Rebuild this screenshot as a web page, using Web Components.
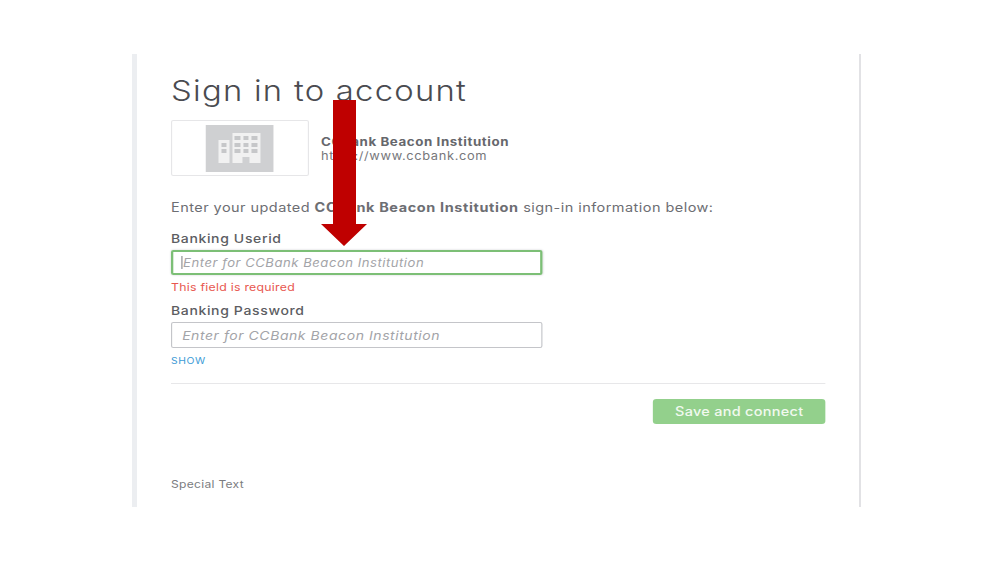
<!DOCTYPE html>
<html>
<head>
<meta charset="utf-8">
<title>Sign in to account</title>
<style>
html, body { margin: 0; background: #fff; }
body { font-family: Inter, "Open Sans", sans-serif; color: #6b6c72; }
b { letter-spacing: .53px; }
</style>
</head>
<body>
<signin-page>
  <signin-panel>
    <h1 slot="title">Sign in to account</h1>
    <bank-card slot="bank" name="CCBank Beacon Institution" url="https://www.ccbank.com"></bank-card>
    <span slot="intro">Enter your updated <b>CCBank Beacon Institution</b> sign-in information below:</span>
    <text-field slot="fields" label="Banking Userid" state="focus" error="This field is required"></text-field>
    <text-field slot="fields" label="Banking Password" action="SHOW"></text-field>
    <span slot="button">Save and connect</span>
    <span slot="footer">Special Text</span>
  </signin-panel>
  <down-arrow></down-arrow>
</signin-page>

<script>
const pageTemplate = document.createElement('template');
pageTemplate.innerHTML = `
<style>
:host { display: block; position: relative; width: 999px; height: 562px; padding: 54px 0 0 132px; box-sizing: border-box; overflow: hidden; }
</style>
<slot></slot>
`;

class SigninPage extends HTMLElement {
	constructor() {
		super();
		this.attachShadow({ mode: 'open' }).append(pageTemplate.content.cloneNode(true));
	}
}

// the reference is a screenshot stretched sideways, so the column is stretched the same way
const panelTemplate = document.createElement('template');
panelTemplate.innerHTML = `
<style>
:host { display: block; width: 729px; height: 453px; box-sizing: border-box; border-left: 5px solid #eceef1; border-right: 2px solid #e2e2e5; padding: 20px 0 0 34px; }
.column { width: 569.3px; transform: scaleX(1.15); transform-origin: left top; }
.title ::slotted(h1) { margin: 0; font-size: 28.5px; line-height: 34px; font-weight: 300; letter-spacing: 1.1px; color: #4a4b50; }
.bank { margin-top: 12px; }
.intro { margin-top: 23px; font-size: 12.6px; line-height: 18px; letter-spacing: .4px; color: #6d6e73; }
.fields { margin-top: 14px; display: flex; flex-direction: column; }
hr { margin: 16px 0 0; border: 0; border-top: 1.5px solid #e7e7e9; }
.actions { display: flex; justify-content: flex-end; margin-top: 15px; }
.button { width: 150.4px; height: 25px; display: flex; align-items: center; justify-content: center; background: #93d08c; border-radius: 3px; color: #f1f9ef; font-size: 12.6px; font-weight: 500; letter-spacing: .25px; }
.footer { margin-top: 53px; font-size: 10.5px; line-height: 16px; letter-spacing: .25px; color: #7b7c80; }
</style>
<div class="column">
	<div class="title"><slot name="title"></slot></div>
	<div class="bank"><slot name="bank"></slot></div>
	<div class="intro"><slot name="intro"></slot></div>
	<div class="fields"><slot name="fields"></slot></div>
	<hr>
	<div class="actions"><div class="button"><slot name="button"></slot></div></div>
	<div class="footer"><slot name="footer"></slot></div>
</div>
`;

class SigninPanel extends HTMLElement {
	constructor() {
		super();
		this.attachShadow({ mode: 'open' }).append(panelTemplate.content.cloneNode(true));
	}
}

const cardTemplate = document.createElement('template');
cardTemplate.innerHTML = `
<style>
:host { display: flex; align-items: center; gap: 10.4px; }
.logo { width: 120px; height: 56px; box-sizing: border-box; border: 1px solid #e6e6e8; border-radius: 2px; display: flex; align-items: center; justify-content: center; }
svg { display: block; }
.info { padding-top: 2px; }
.name { font-size: 11.6px; line-height: 14px; font-weight: 700; letter-spacing: .5px; color: #66676c; }
.url { font-size: 11.2px; line-height: 15px; letter-spacing: .55px; color: #77787c; }
</style>
<div class="logo">
	<svg width="59.1" height="47" viewBox="0 0 68 47" preserveAspectRatio="none">
		<rect width="68" height="47" fill="#cfd0d2"/>
		<path fill="#f1f1f1" d="M13 15h11v23H13zM27 8h28v30H44v-6h-7v6H27z"/>
		<path fill="#c6c7c9" d="M16 18h5v4h-5zM16 24h5v4h-5zM29 11h6v4h-6zM38 11h5v4h-5zM46 11h6v4h-6zM29 18h6v4h-6zM38 18h5v4h-5zM46 18h6v4h-6zM29 24h6v4h-6zM38 24h5v4h-5zM46 24h6v4h-6z"/>
	</svg>
</div>
<div class="info">
	<div class="name"></div>
	<div class="url"></div>
</div>
`;

class BankCard extends HTMLElement {
	constructor() {
		super();
		let shadowDOM = this.attachShadow({ mode: 'open' });
		shadowDOM.append(cardTemplate.content.cloneNode(true));
		shadowDOM.querySelector('.name').textContent = this.getAttribute('name');
		shadowDOM.querySelector('.url').textContent = this.getAttribute('url');
	}
}

const fieldTemplate = document.createElement('template');
fieldTemplate.innerHTML = `
<style>
:host { display: block; width: 322.7px; }
.label { font-size: 12.2px; line-height: 16px; font-weight: 500; letter-spacing: .55px; color: #5c5d62; margin-bottom: 3px; }
.box { position: relative; height: 26px; box-sizing: border-box; border: 1px solid #c4c5c9; border-radius: 2px; padding-left: 8.7px; display: flex; align-items: center; font-size: 12.2px; font-style: italic; letter-spacing: .48px; color: #a3a4a8; }
:host([state="focus"]) .box { border: 2px solid #7cbf76; box-shadow: 0 0 2px #c9cacc; height: 25px; padding-left: 7px; font-size: 11.4px; letter-spacing: .45px; }
.caret { display: none; width: 1px; height: 13px; background: #8b8c90; margin-right: .5px; }
:host([state="focus"]) .caret { display: block; }
.error { font-size: 10.7px; line-height: 14px; letter-spacing: .23px; color: #e8574f; margin: 6px 0 8px; }
.action { font-size: 9px; line-height: 12px; letter-spacing: .5px; color: #3d9bd6; margin-top: 7px; }
.error:empty, .action:empty { display: none; }
</style>
<div class="label"></div>
<div class="box"><span class="caret"></span><span>Enter for CCBank Beacon Institution</span></div>
<div class="error"></div>
<div class="action"></div>
`;

class TextField extends HTMLElement {
	constructor() {
		super();
		let shadowDOM = this.attachShadow({ mode: 'open' });
		shadowDOM.append(fieldTemplate.content.cloneNode(true));
		shadowDOM.querySelector('.label').textContent = this.getAttribute('label');
		shadowDOM.querySelector('.error').textContent = this.getAttribute('error') || '';
		shadowDOM.querySelector('.action').textContent = this.getAttribute('action') || '';
	}
}

const arrowTemplate = document.createElement('template');
arrowTemplate.innerHTML = `
<style>
:host { display: block; position: absolute; left: 321px; top: 100px; width: 46px; height: 146px; }
svg { display: block; }
</style>
<svg width="46" height="146" viewBox="0 0 46 146"><path fill="#bf0000" d="M12 0h23v124h11L23 146 0 124h12z"/></svg>
`;

class DownArrow extends HTMLElement {
	constructor() {
		super();
		this.attachShadow({ mode: 'open' }).append(arrowTemplate.content.cloneNode(true));
	}
}

customElements.define('signin-page', SigninPage);
customElements.define('signin-panel', SigninPanel);
customElements.define('bank-card', BankCard);
customElements.define('text-field', TextField);
customElements.define('down-arrow', DownArrow);
</script>
</body>
</html>
